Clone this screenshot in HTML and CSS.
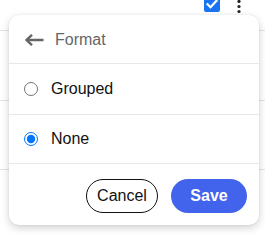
FILE: index.html
```html
<!DOCTYPE html>
<html>
<head>
<meta charset="utf-8">
<link rel="stylesheet" href="styles.css">
</head>
<body>
<div class="page">
  <div class="bg-row bg-top">
    <span class="check">
      <svg width="16" height="16" viewBox="0 0 16 16"><path d="M3.5 8.2l3 3 6-6.5" fill="none" stroke="#fff" stroke-width="2.2" stroke-linecap="square"/></svg>
    </span>
    <svg class="kebab" width="4" height="14" viewBox="0 0 4 14"><circle cx="2" cy="1.5" r="1.6" fill="#222"/><circle cx="2" cy="6.5" r="1.6" fill="#222"/><circle cx="2" cy="11.5" r="1.6" fill="#222"/></svg>
  </div>
  <div class="bg-row bg-mid"></div>
  <div class="bg-row bg-low"></div>

  <div class="popup">
    <div class="head">
      <svg class="back" width="20" height="12" viewBox="0 0 20 12"><path d="M19.5 6H2.5M8 0.8L2.5 6L8 11.2" fill="none" stroke="#666" stroke-width="2.4"/></svg>
      <span class="title">Format</span>
    </div>
    <label class="opt opt-1"><input type="radio" name="fmt"><span>Grouped</span></label>
    <label class="opt opt-2"><input type="radio" name="fmt" checked><span>None</span></label>
    <div class="foot">
      <button class="btn cancel">Cancel</button>
      <button class="btn save">Save</button>
    </div>
  </div>
</div>
</body>
</html>
```
FILE: styles.css
```css
html, body {
  margin: 0;
  padding: 0;
  background: #fff;
  font-family: "Liberation Sans", Arial, sans-serif;
}
.page {
  position: relative;
  width: 265px;
  height: 235px;
  overflow: hidden;
}
.bg-row {
  border-bottom: 1px solid #e3e3e3;
  box-sizing: border-box;
}
.bg-top {
  height: 31px;
  display: flex;
  align-items: flex-start;
  padding-left: 204px;
}
.check {
  width: 16px;
  height: 16px;
  margin-top: -4px;
  background: #1a73f0;
  border-radius: 2px;
  display: block;
}
.check svg { display: block; }
.kebab {
  display: block;
  margin-left: 17px;
  margin-top: -0.5px;
}
.bg-mid { height: 70px; }
.bg-low { height: 69px; }

.popup {
  position: absolute;
  left: 9px;
  top: 15px;
  width: 250px;
  height: 210px;
  background: #fff;
  border-radius: 10px;
  box-shadow: 0 3px 8px rgba(0,0,0,0.18), 0 0 2px rgba(0,0,0,0.08);
  display: flex;
  flex-direction: column;
  overflow: hidden;
}
.head {
  height: 48px;
  display: flex;
  align-items: center;
  padding-left: 15px;
  gap: 11px;
  border-bottom: 1px solid #e8e8e8;
  flex: none;
}
.back { display: block; margin-top: 2px; }
.title {
  font-size: 16px;
  color: #666;
  margin-top: 1px;
}
.opt {
  display: flex;
  align-items: center;
  padding-left: 15px;
  gap: 13px;
  border-bottom: 1px solid #e8e8e8;
  font-size: 16px;
  color: #111;
  flex: none;
}
.opt-1 { height: 50px; }
.opt-2 { height: 48px; }
.opt input {
  margin: 0;
  width: 14px;
  height: 14px;
}
.foot {
  flex: 1;
  display: flex;
  justify-content: flex-end;
  align-items: flex-start;
  gap: 13px;
  padding: 15px 12px 0 0;
}
.btn {
  height: 34px;
  border-radius: 17px;
  font-family: "Liberation Sans", Arial, sans-serif;
  font-size: 16px;
  box-sizing: border-box;
  cursor: pointer;
}
.cancel {
  width: 72px;
  background: #fff;
  border: 1px solid #111;
  color: #111;
  padding: 0;
}
.save {
  width: 76px;
  background: #4263eb;
  border: none;
  color: #fff;
  font-weight: bold;
  padding: 0;
}
```
